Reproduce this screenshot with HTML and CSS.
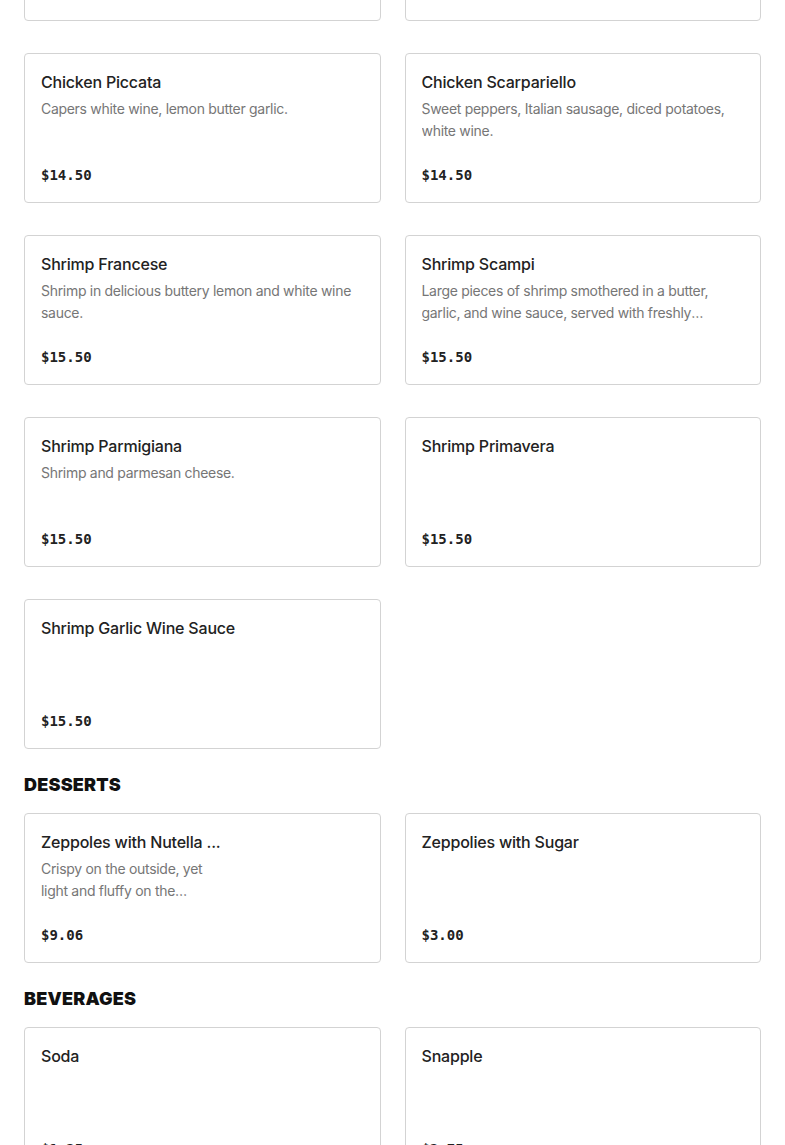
FILE: index.html
```html
<!DOCTYPE html>
<html lang="en">
<head>
<meta charset="utf-8">
<title>Menu</title>
<link rel="stylesheet" href="styles.css">
</head>
<body>
<main class="menu">
  <section class="section section-first">
    <div class="grid">
      <div class="card"><div class="card-text"><h3 class="name">Chicken Parmigiana</h3><p class="desc">Breaded chicken, marinara sauce, mozzarella.</p><div class="price">$14.50</div></div></div>
      <div class="card"><div class="card-text"><h3 class="name">Chicken Marsala</h3><p class="desc">Mushrooms, marsala wine sauce.</p><div class="price">$14.50</div></div></div>
      <div class="card"><div class="card-text"><h3 class="name">Chicken Piccata</h3><p class="desc">Capers white wine, lemon butter garlic.</p><div class="price">$14.50</div></div></div>
      <div class="card"><div class="card-text"><h3 class="name">Chicken Scarpariello</h3><p class="desc">Sweet peppers, Italian sausage, diced potatoes, white wine.</p><div class="price">$14.50</div></div></div>
      <div class="card"><div class="card-text"><h3 class="name">Shrimp Francese</h3><p class="desc">Shrimp in delicious buttery lemon and white wine sauce.</p><div class="price">$15.50</div></div></div>
      <div class="card"><div class="card-text"><h3 class="name">Shrimp Scampi</h3><p class="desc">Large pieces of shrimp smothered in a butter, garlic, and wine sauce, served with freshly homemade linguine pasta.</p><div class="price">$15.50</div></div></div>
      <div class="card"><div class="card-text"><h3 class="name">Shrimp Parmigiana</h3><p class="desc">Shrimp and parmesan cheese.</p><div class="price">$15.50</div></div></div>
      <div class="card"><div class="card-text"><h3 class="name">Shrimp Primavera</h3><p class="desc"></p><div class="price">$15.50</div></div></div>
      <div class="card"><div class="card-text"><h3 class="name">Shrimp Garlic Wine Sauce</h3><p class="desc"></p><div class="price">$15.50</div></div></div>
    </div>
  </section>
  <section class="section">
    <h2 class="section-title">DESSERTS</h2>
    <div class="grid">
      <div class="card card-media"><div class="card-text"><h3 class="name">Zeppoles with Nutella ...</h3><p class="desc">Crispy on the outside, yet light and fluffy on the inside, served with Nutella.</p><div class="price">$9.06</div></div><div class="media"></div></div>
      <div class="card"><div class="card-text"><h3 class="name">Zeppolies with Sugar</h3><p class="desc"></p><div class="price">$3.00</div></div></div>
    </div>
  </section>
  <section class="section">
    <h2 class="section-title">BEVERAGES</h2>
    <div class="grid">
      <div class="card"><div class="card-text"><h3 class="name">Soda</h3><p class="desc"></p><div class="price">$1.25</div></div></div>
      <div class="card"><div class="card-text"><h3 class="name">Snapple</h3><p class="desc"></p><div class="price">$2.75</div></div></div>
    </div>
  </section>
</main>
</body>
</html>
```
FILE: styles.css
```css
* { box-sizing: border-box; }
html, body { margin: 0; padding: 0; background: #fff; }
body {
  font-family: Inter, "Noto Sans", "Liberation Sans", sans-serif;
  color: #222;
  overflow: hidden;
}
.menu {
  padding: 0 24px;
  margin-top: -129px;
}
.section-title {
  margin: 24px 0 16px;
  font-size: 18px;
  line-height: 24px;
  font-weight: 900;
  letter-spacing: 0.2px;
  color: #111;
}
.grid {
  display: grid;
  grid-template-columns: 1fr 1fr;
  column-gap: 24px;
  row-gap: 32px;
}
.card {
  height: 150px;
  border: 1px solid #d3d3d3;
  border-radius: 4px;
  padding: 16px;
  display: flex;
  gap: 16px;
  background: #fff;
}
.card-text {
  flex: 1;
  min-width: 0;
  display: flex;
  flex-direction: column;
}
.card-media .card-text { flex: 0 0 184px; }
.card-media .desc { width: 166px; }
.media { flex: 1; }
.name {
  margin: 0;
  font-size: 16px;
  line-height: 24px;
  font-weight: 500;
  letter-spacing: -0.2px;
  color: #222;
  white-space: nowrap;
}
.desc {
  margin: 4px 0 0;
  font-size: 14px;
  line-height: 22px;
  letter-spacing: -0.3px;
  color: #767676;
  display: -webkit-box;
  -webkit-line-clamp: 2;
  -webkit-box-orient: vertical;
  overflow: hidden;
}
.price {
  margin-top: auto;
  font-family: "DejaVu Sans Mono", "Liberation Mono", monospace;
  font-weight: 700;
  font-size: 14px;
  line-height: 22px;
  color: #222;
}
```
